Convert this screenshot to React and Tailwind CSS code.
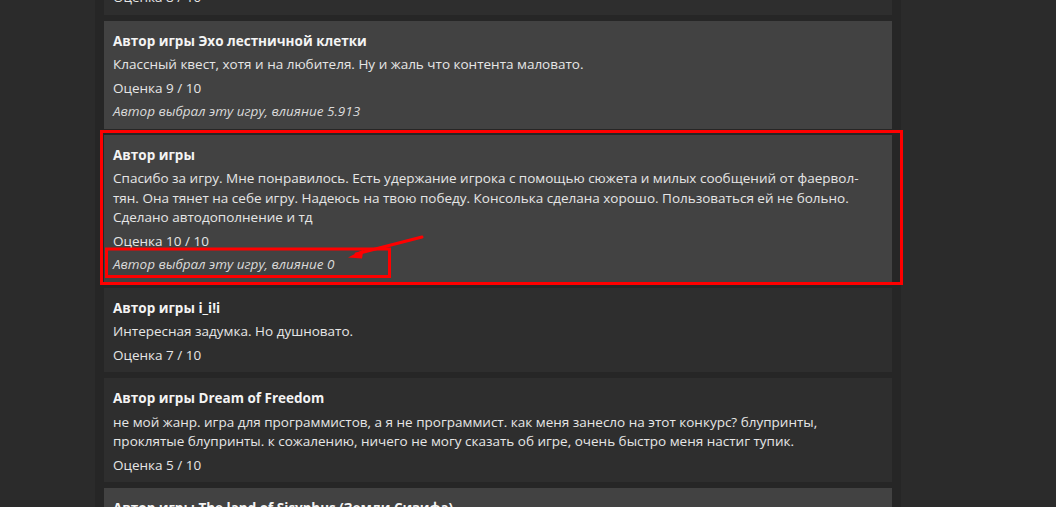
const reviews = [
  {
    title: "Автор игры",
    body: ["Отличная работа, спасибо."],
    score: "8 / 10",
    tone: "dark",
  },
  {
    title: "Автор игры Эхо лестничной клетки",
    body: ["Классный квест, хотя и на любителя. Ну и жаль что контента маловато."],
    score: "9 / 10",
    note: "Автор выбрал эту игру, влияние 5.913",
    tone: "light",
  },
  {
    title: "Автор игры",
    body: [
      "Спасибо за игру. Мне понравилось. Есть удержание игрока с помощью сюжета и милых сообщений от фаервол-",
      "тян. Она тянет на себе игру. Надеюсь на твою победу. Консолька сделана хорошо. Пользоваться ей не больно.",
      "Сделано автодополнение и тд",
    ],
    score: "10 / 10",
    note: "Автор выбрал эту игру, влияние 0",
    tone: "light",
  },
  {
    title: "Автор игры i_i!i",
    body: ["Интересная задумка. Но душновато."],
    score: "7 / 10",
    tone: "dark",
  },
  {
    title: "Автор игры Dream of Freedom",
    body: [
      "не мой жанр. игра для программистов, а я не программист. как меня занесло на этот конкурс? блупринты,",
      "проклятые блупринты. к сожалению, ничего не могу сказать об игре, очень быстро меня настиг тупик.",
    ],
    score: "5 / 10",
    tone: "dark",
  },
  {
    title: "Автор игры The land of Sisyphus (Земли Сизифа)",
    body: ["Хорошая атмосфера."],
    score: "8 / 10",
    tone: "light",
  },
];

const ReviewCard = ({ review }) => {
  return (
    <div
      className={`flex flex-col gap-[4px] px-[9px] pt-[11px] pb-[7px] ${
        review.tone === "light" ? "bg-[#424242]" : "bg-[#2e2e2e]"
      }`}
    >
      <div className="font-bold text-[#f4f4f4]">{review.title}</div>
      <div className="text-[#e6e6e6]">
        {review.body.map((line, i) => (
          <div key={i} className="whitespace-nowrap">
            {line}
          </div>
        ))}
      </div>
      <div className="text-[#e6e6e6]">Оценка {review.score}</div>
      {review.note && <div className="italic text-[#dadada]">{review.note}</div>}
    </div>
  );
};

export default function App() {
  return (
    <div
      className="relative h-[507px] w-[1056px] overflow-hidden bg-[#2b2b2b] text-[13.5px] leading-[19.5px]"
      style={{ fontFamily: '"Open Sans", "Noto Sans", sans-serif' }}
    >
      <div className="ml-[95px] mt-[-70px] flex w-[806px] flex-col gap-[6px] bg-[#262626] px-[9px]">
        {reviews.map((r, i) => (
          <ReviewCard key={i} review={r} />
        ))}
      </div>

      {/* annotation overlay */}
      <svg
        className="pointer-events-none absolute left-0 top-0"
        width="1056"
        height="507"
        viewBox="0 0 1056 507"
      >
        <rect x="101.5" y="131.5" width="800" height="152" fill="none" stroke="#ff0000" strokeWidth="3" />
        <rect x="106.5" y="249" width="283" height="27.5" fill="none" stroke="#ff0000" strokeWidth="3" />
        <line x1="422" y1="237" x2="356" y2="254" stroke="#ff0000" strokeWidth="3" strokeLinecap="round" />
        <polygon points="348,257.5 363.5,249.5 362,258.5" fill="#ff0000" />
      </svg>
    </div>
  );
}
